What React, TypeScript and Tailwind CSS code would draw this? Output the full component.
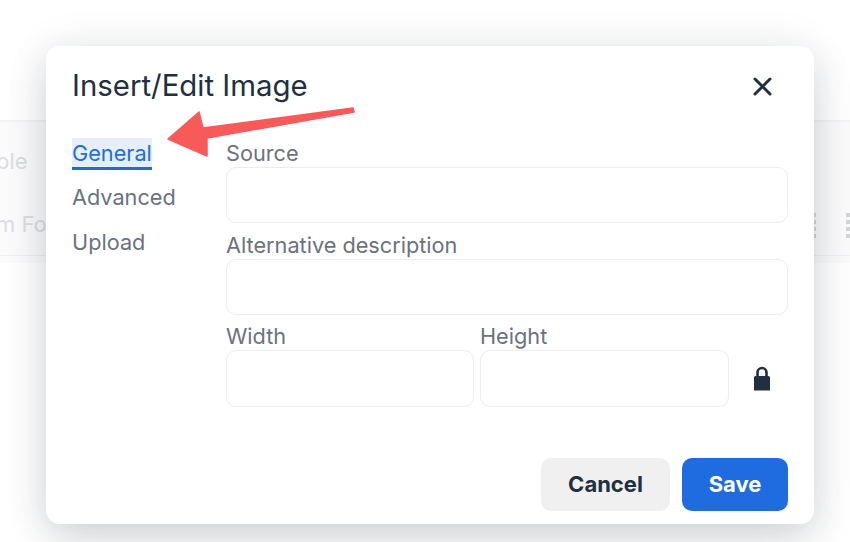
function Field({ label, className, tall }: { label: string; className?: string; tall?: boolean }) {
  return (
    <div className={className}>
      <div className="text-[21.7px] leading-[28px] text-[#6b7280]">{label}</div>
      <div className={`${tall ? "h-[57px]" : "h-[56px]"} rounded-[10px] border border-[#ebedef] bg-white`} />
    </div>
  )
}

function Dots({ className }: { className: string }) {
  return (
    <div className={`absolute top-[91px] flex flex-col gap-[3px] ${className}`}>
      <div className="h-[4px] w-full bg-[#d4d5d9]" />
      <div className="h-[4px] w-full bg-[#d4d5d9]" />
      <div className="h-[4px] w-full bg-[#d4d5d9]" />
      <div className="h-[4px] w-full bg-[#d4d5d9]" />
    </div>
  )
}

export default function App() {
  return (
    <div className="relative h-[542px] w-[850px] overflow-hidden bg-white font-['Inter',sans-serif]">
      {/* faded editor behind the dialog */}
      <div className="absolute left-0 right-0 top-[120px] h-[143px] border-t-2 border-[#f3f3f5] bg-[#fbfbfc] text-[22px] text-[#dcdde0]">
        <div className="absolute left-[-4px] top-[23px]">ble</div>
        <div className="absolute left-[-4px] top-[86px]">m Fo</div>
        <div className="absolute left-0 right-0 top-[133px] h-[1px] bg-[#f0f0f2]" />
        <Dots className="left-[814px] w-[2px]" />
        <Dots className="left-[846px] w-[6px]" />
      </div>

      <div className="relative ml-[46px] mt-[46px] flex h-[478px] w-[768px] flex-col rounded-[14px] bg-white shadow-[0_14px_40px_-2px_rgba(34,47,62,0.2),0_0_50px_rgba(34,47,62,0.06)]">
        <div className="flex items-center justify-between pl-[26px] pr-[42px] pt-[20px]">
          <h1 className="text-[29.4px] font-normal leading-[40px] text-[#222f3e]">Insert/Edit Image</h1>
          <svg width="19" height="19" viewBox="0 0 19 19" fill="none" stroke="#222f3e" strokeWidth="3" strokeLinecap="round">
            <path d="M2 2 17 17M17 2 2 17" />
          </svg>
        </div>

        <div className="flex flex-1 pl-[26px] pr-[26px]">
          <div className="flex w-[154px] shrink-0 flex-col gap-[14px] pt-[32px] text-[21.7px] leading-[31px] text-[#6b7280]">
            <div className="-mb-[2px] h-[32px] w-fit border-b-[3px] border-[#2a6ac9] bg-[#e6eef9] leading-[30px] text-[#1f6fd6]">General</div>
            <div>Advanced</div>
            <div>Upload</div>
          </div>
          <div className="flex flex-1 flex-col gap-[8px] pt-[33px]">
            <Field label="Source" />
            <Field label="Alternative description" />
            <div className="-mt-px flex items-end gap-[6px]">
              <Field label="Width" tall className="w-[248px]" />
              <Field label="Height" tall className="w-[249px]" />
              <div className="flex h-[57px] flex-1 items-center justify-center">
                <svg width="18" height="25" viewBox="0 0 18 25" fill="none">
                  <path d="M4.5 11V6.5a4.5 4.5 0 0 1 9 0V11" stroke="#222f3e" strokeWidth="2.6" />
                  <path d="M2.5 10h13a1.5 1.5 0 0 1 1.5 1.5V24.5H1V11.5A1.5 1.5 0 0 1 2.5 10Z" fill="#222f3e" />
                </svg>
              </div>
            </div>
          </div>
        </div>

        <div className="flex justify-end gap-[12px] pb-[13px] pr-[26px]">
          <button className="h-[53px] w-[129px] rounded-[10px] bg-[#f0f0f1] text-[22px] font-bold text-[#222f3e]">Cancel</button>
          <button className="h-[53px] w-[106px] rounded-[10px] bg-[#1f6ce0] text-[22px] font-bold text-white">Save</button>
        </div>

        {/* annotation arrow */}
        <svg className="absolute left-0 top-0" width="400" height="130" viewBox="46 46 400 130" fill="none">
          <path d="M168 139 199 112 203 128 353 108 354 112 207 138 207 156Z" fill="#f85a5a" stroke="#f85a5a" strokeWidth="1.5" strokeLinejoin="round" />
        </svg>
      </div>
    </div>
  )
}
